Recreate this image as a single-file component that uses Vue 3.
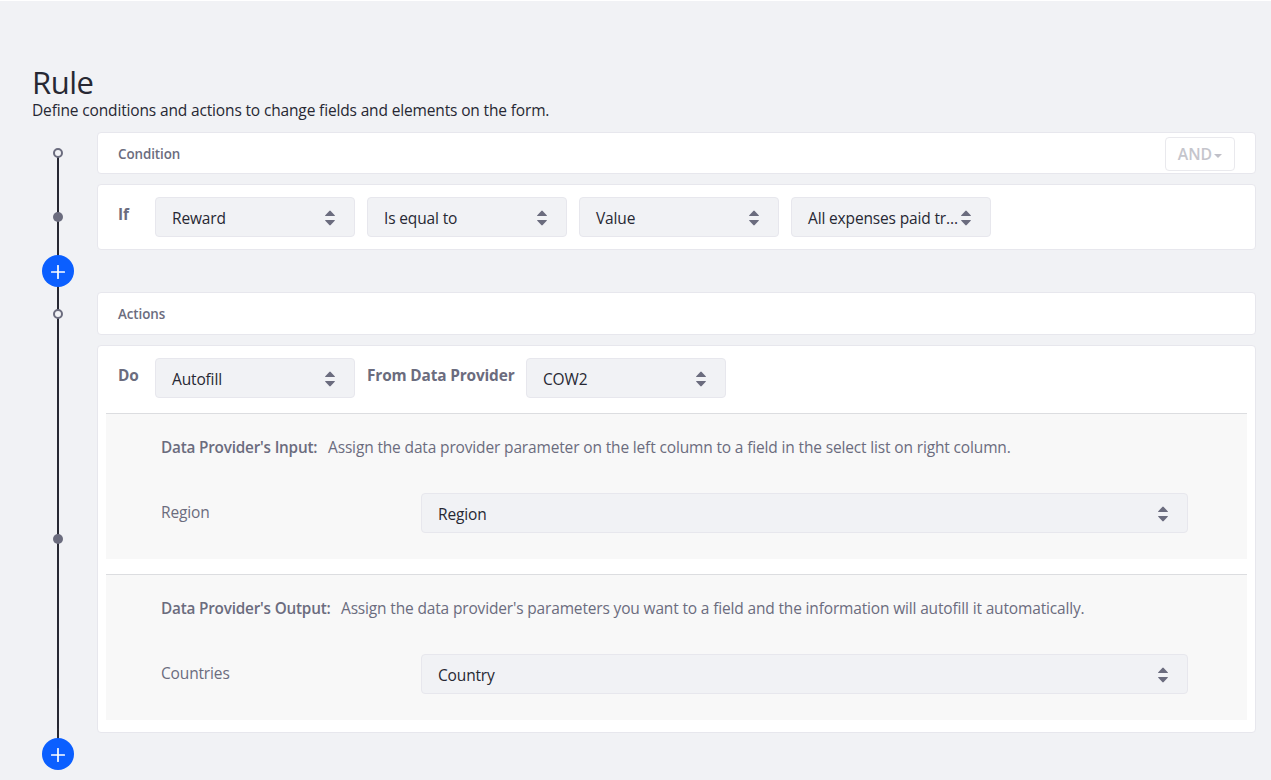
<script setup>
import { h } from 'vue'

const conditionFields = ['Reward', 'Is equal to', 'Value', 'All expenses paid tr...']

const mappings = [
  {
    title: "Data Provider's Input:",
    hint: 'Assign the data provider parameter on the left column to a field in the select list on right column.',
    label: 'Region',
    value: 'Region',
    kind: 'input',
  },
  {
    title: "Data Provider's Output:",
    hint: "Assign the data provider's parameters you want to a field and the information will autofill it automatically.",
    label: 'Countries',
    value: 'Country',
    kind: 'output',
  },
]

const CaretDouble = () =>
  h('svg', { width: 10, height: 16, viewBox: '0 0 10 16' }, [
    h('path', {
      fill: '#6b6c7e',
      d: 'M.6 6Q-.3 6 .3 5.2L4.3.9Q5 .2 5.7.9L9.7 5.2Q10.300 6 9.400 6ZM.6 10Q-.3 10 .3 10.800L4.300 15.100Q5 15.800 5.700 15.100L9.700 10.800Q10.300 10 9.400 10Z',
    }),
  ])

const PlusIcon = () =>
  h('svg', { width: 14, height: 14, viewBox: '0 0 14 14' }, [
    h('path', { d: 'M7 .7V13.300M.7 7H13.300', stroke: '#fff', 'stroke-width': 1.7, 'stroke-linecap': 'round' }),
  ])
</script>

<template>
  <main class="page">
    <h1 class="title">Rule</h1>
    <p class="subtitle">Define conditions and actions to change fields and elements on the form.</p>

    <div class="timeline">
      <div class="line"></div>

      <span class="dot hollow r1"></span>
      <section class="card header r1">
        <h2>Condition</h2>
        <button class="operator" disabled>AND<i class="caret"></i></button>
      </section>

      <span class="dot r2"></span>
      <section class="card row r2">
        <b class="if">If</b>
        <div v-for="field in conditionFields" :key="field" class="select">
          <span>{{ field }}</span><CaretDouble />
        </div>
      </section>

      <button class="add r3"><PlusIcon /></button>

      <span class="dot hollow r4"></span>
      <section class="card header r4"><h2>Actions</h2></section>

      <span class="dot r5"></span>
      <section class="card action r5">
        <div class="row">
          <b class="do">Do</b>
          <div class="select"><span>Autofill</span><CaretDouble /></div>
          <b class="from">From Data Provider</b>
          <div class="select"><span>COW2</span><CaretDouble /></div>
        </div>
        <div v-for="m in mappings" :key="m.kind" class="mapping" :class="m.kind">
          <p class="intro"><b>{{ m.title }}</b><span>{{ m.hint }}</span></p>
          <div class="pair">
            <label>{{ m.label }}</label>
            <div class="select wide"><span>{{ m.value }}</span><CaretDouble /></div>
          </div>
        </div>
      </section>

      <button class="add r6"><PlusIcon /></button>
    </div>
  </main>
</template>

<style>
body {
  background: #f1f2f5;
}
</style>

<style scoped>
.page {
  box-sizing: border-box;
  height: 780px;
  padding-top: 61px;
  overflow: hidden;
  border-top: 1px solid #fff;
  background: #f1f2f5;
  color: #272833;
  font-family: 'Open Sans', 'Noto Sans', sans-serif;
  font-size: 15.5px;
  letter-spacing: -0.15px;
  white-space: nowrap;
}
.title {
  margin: 0 0 0 32px;
  height: 38px;
  font-size: 31px;
  font-weight: 400;
  letter-spacing: -0.5px;
  line-height: 40px;
}
.subtitle {
  margin: 0 0 0 32px;
  height: 32px;
  line-height: 21px;
}
.timeline {
  display: grid;
  grid-template-columns: 32px 1159px;
  grid-template-rows: 42px 10px 66px 5px 32px 5px 43px 10px 388px 5px 32px;
  column-gap: 23px;
  padding-left: 42px;
}
.r1 { grid-row: 1; }
.r2 { grid-row: 3; }
.r3 { grid-row: 5; }
.r4 { grid-row: 7; }
.r5 { grid-row: 9; }
.r6 { grid-row: 11; }
.line {
  grid-column: 1;
  grid-row: 1 / -1;
  justify-self: center;
  width: 2px;
  margin: 24px 0 16px;
  background: #272833;
}
.dot {
  box-sizing: border-box;
  grid-column: 1;
  place-self: center;
  width: 10px;
  height: 10px;
  border-radius: 50%;
  background: #6b6c7e;
}
.hollow {
  border: 2px solid #6b6c7e;
  background: #f1f2f5;
}
.add {
  grid-column: 1;
  display: flex;
  align-items: center;
  justify-content: center;
  width: 32px;
  height: 32px;
  padding: 2px 0 0;
  border: 0;
  border-radius: 50%;
  background: #0b5fff;
}
.card {
  box-sizing: border-box;
  grid-column: 2;
  border: 1px solid #e7e7ed;
  border-radius: 4px;
  background: #fff;
}
.header {
  display: flex;
  align-items: center;
  justify-content: space-between;
  padding: 0 20px;
}
.header h2 {
  margin: 1px 0 0;
  color: #6b6c7e;
  font-size: 13.4px;
  font-weight: 600;
  letter-spacing: -0.08px;
  line-height: 19px;
}
.header.r1 h2 { margin-top: 3px; }
.operator {
  box-sizing: border-box;
  display: flex;
  align-items: center;
  justify-content: center;
  gap: 2px;
  width: 70px;
  height: 34px;
  margin-top: 2px;
  padding: 0;
  border: 1px solid #e9e9ed;
  border-radius: 4px;
  background: #fff;
  color: #c5c5cc;
  font: 600 15.8px 'Open Sans', sans-serif;
}
.caret {
  margin-top: 3px;
  border: 4px solid transparent;
  border-top-color: #c0c0c8;
  border-bottom: 0;
}
.row {
  display: flex;
  gap: 12px;
  padding: 12px 20px;
}
.row b {
  color: #6b6c7e;
  font-size: 15.4px;
  font-weight: 700;
  line-height: 35px;
}
.row .if,
.row .do { width: 25px; }
.row .from { width: 147px; }
.select {
  box-sizing: border-box;
  display: flex;
  align-items: center;
  justify-content: space-between;
  width: 200px;
  height: 40px;
  padding: 2px 19px 0 16px;
  border: 1px solid #e7e7ed;
  border-radius: 4px;
  background: #f1f2f5;
}
.action {
  display: flex;
  flex-direction: column;
}
.mapping {
  box-sizing: border-box;
  height: 146px;
  margin: 3px 8px 12px;
  padding: 20px 58px 0 55px;
  border-top: 1px solid #dcdde0;
  background: #f8f8f8;
  color: #6b6c7e;
}
.intro {
  margin: 0 0 33px;
  height: 26px;
  line-height: 26px;
}
.intro b {
  display: inline-block;
  width: 167px;
  font-size: 15.3px;
  font-weight: 600;
  letter-spacing: -0.2px;
}
.output .intro b { width: 180px; }
.output .intro span { letter-spacing: -0.16px; }
.pair {
  display: flex;
}
.pair label {
  width: 260px;
  line-height: 38px;
}
.wide {
  width: 767px;
  color: #272833;
}
</style>
